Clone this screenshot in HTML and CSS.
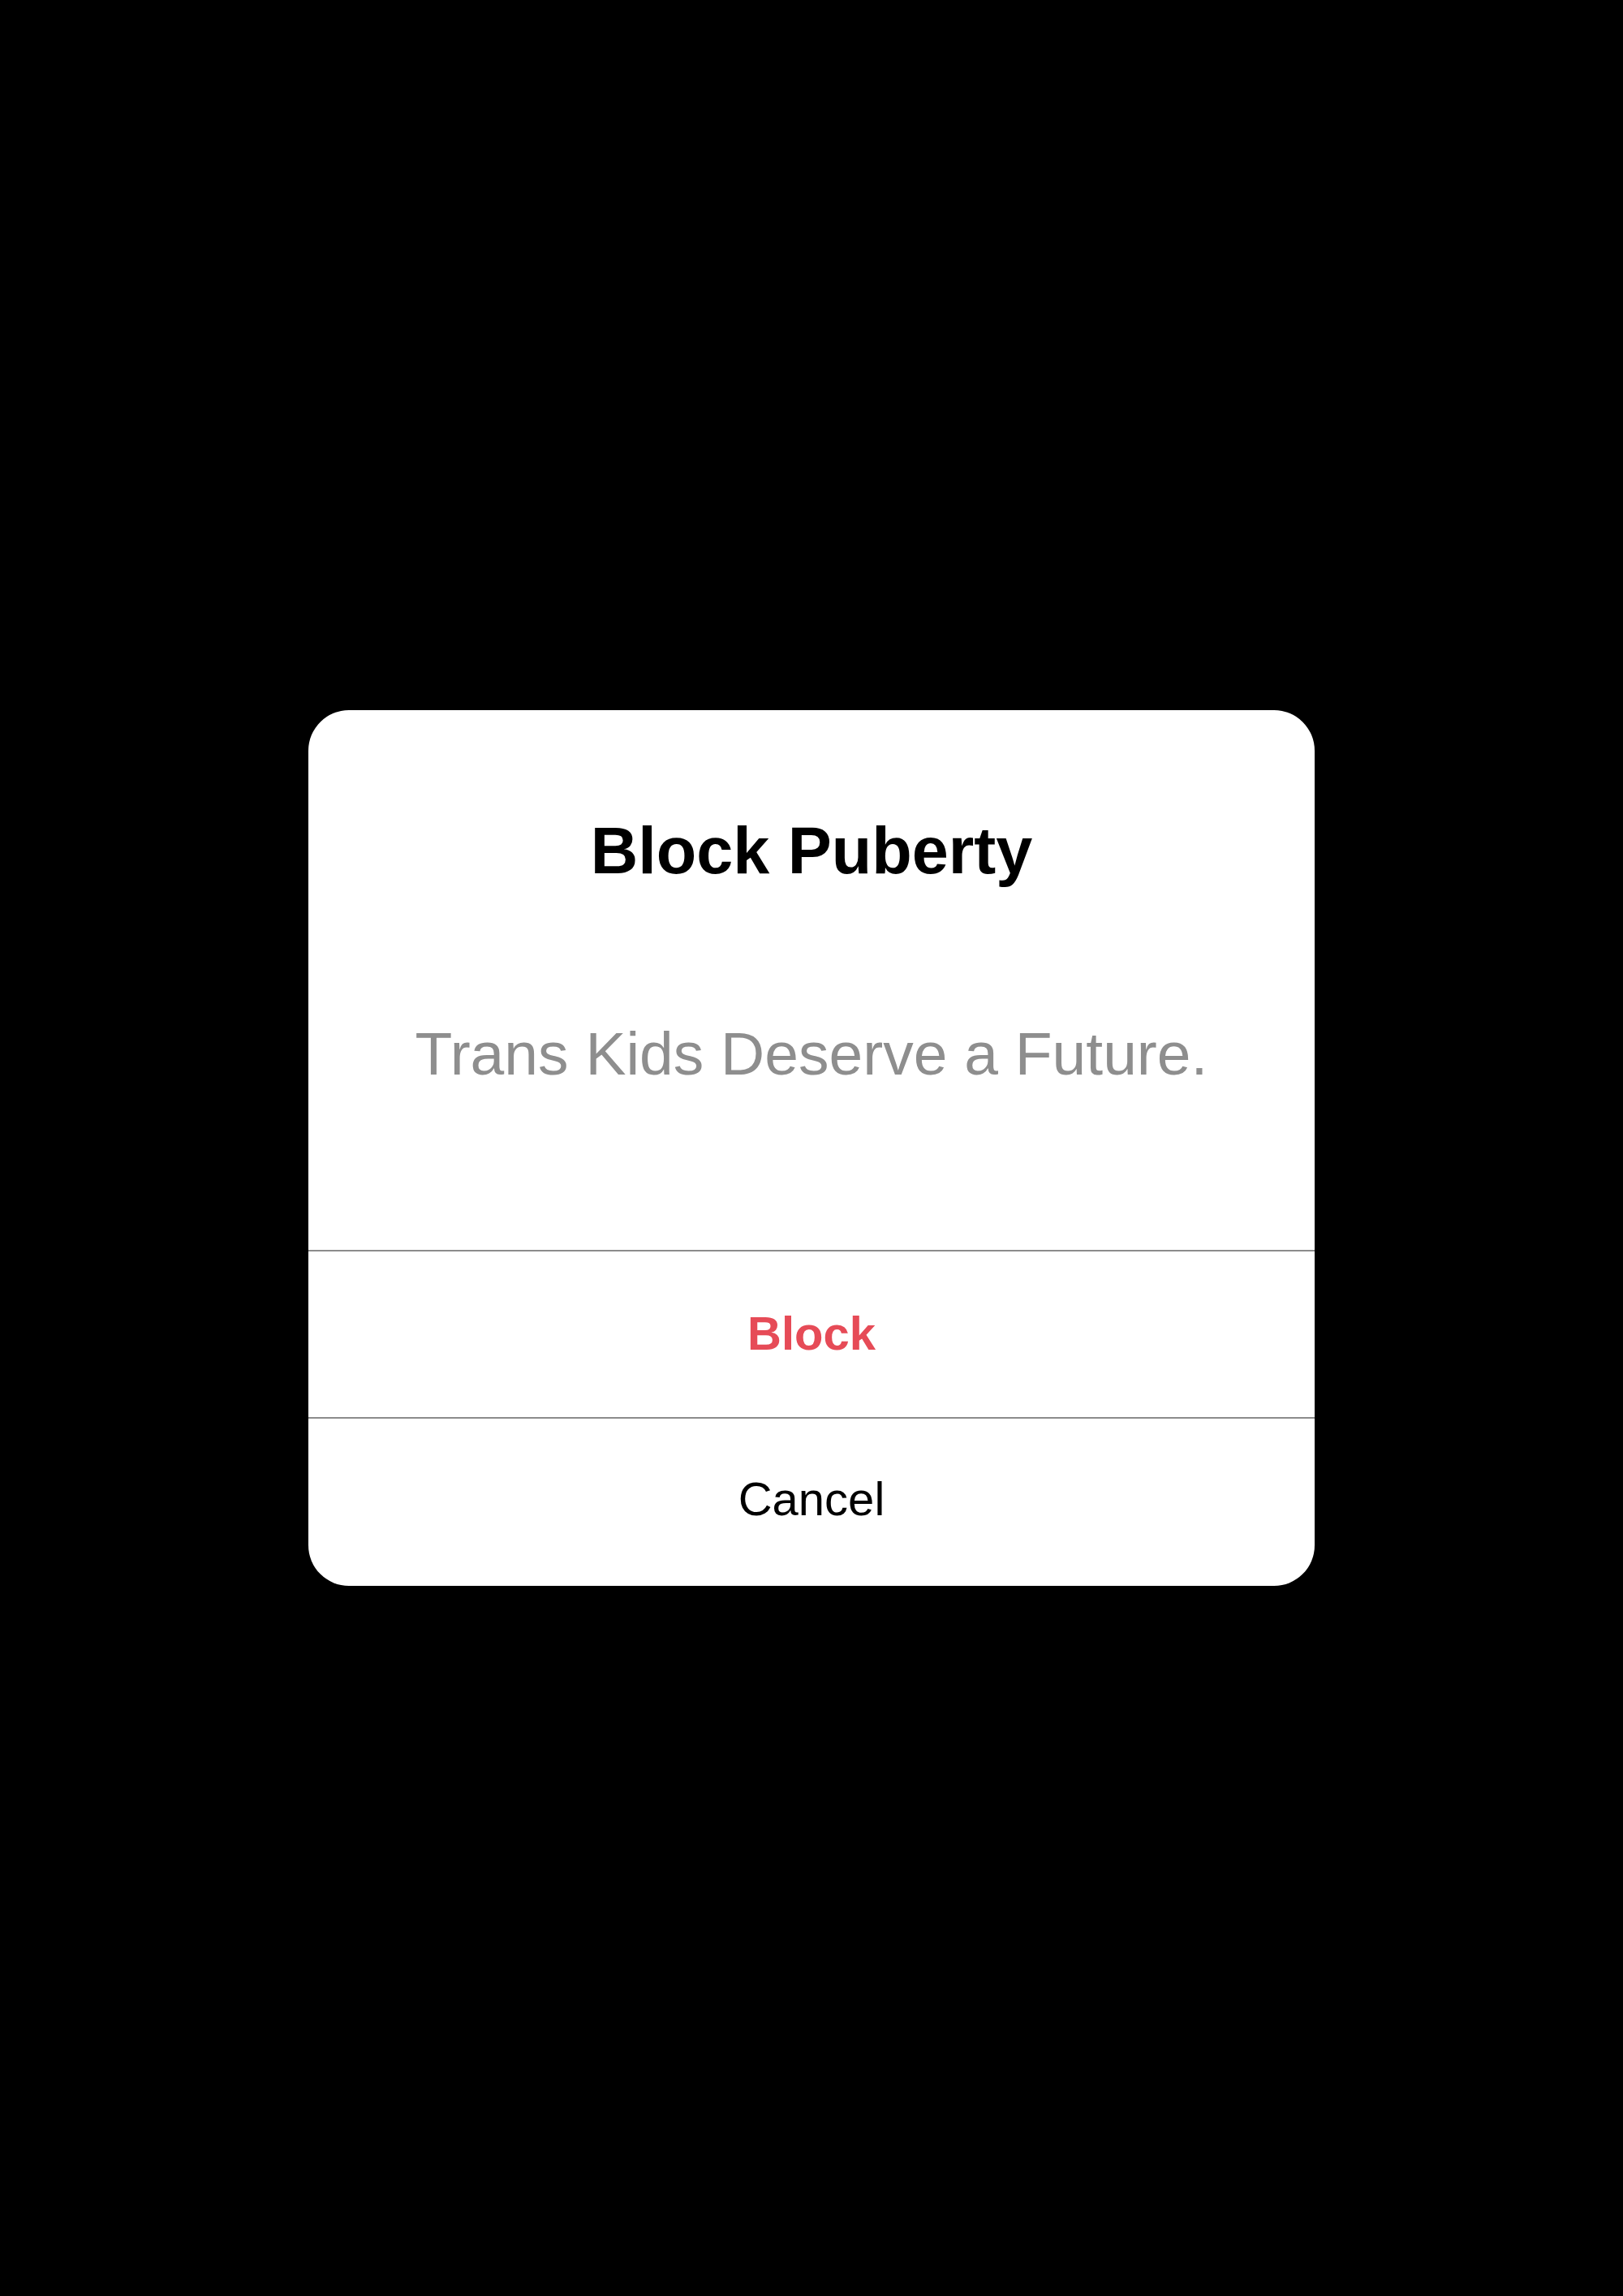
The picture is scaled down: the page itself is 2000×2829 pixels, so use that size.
FILE: index.html
```html
<!DOCTYPE html>
<html lang="en">
<head>
<meta charset="utf-8">
<title>Block Puberty</title>
<link rel="stylesheet" href="styles.css">
</head>
<body>
<div class="screen">
  <div class="alert" role="alertdialog">
    <div class="alert-body">
      <h1 class="alert-title">Block Puberty</h1>
      <p class="alert-message">Trans Kids Deserve a Future.</p>
    </div>
    <div class="alert-action alert-action-destructive">Block</div>
    <div class="alert-action alert-action-cancel">Cancel</div>
  </div>
</div>
</body>
</html>
```

FILE: styles.css
```css
html, body {
  margin: 0;
  padding: 0;
  background: #000;
}

.screen {
  min-height: 100vh;
  display: flex;
  align-items: center;
  justify-content: center;
  font-family: "Liberation Sans", Helvetica, Arial, sans-serif;
}

.alert {
  width: 1240px;
  background: #fff;
  border-radius: 50px;
  overflow: hidden;
  display: flex;
  flex-direction: column;
}

.alert-body {
  padding: 133px 40px 204px;
  display: flex;
  flex-direction: column;
  align-items: center;
  gap: 172px;
}

.alert-title {
  margin: 0;
  font-size: 81px;
  line-height: 81px;
  font-weight: 700;
  color: #000;
  text-align: center;
}

.alert-message {
  margin: 0;
  font-size: 75px;
  line-height: 75px;
  font-weight: 400;
  color: #8e8e8e;
  text-align: center;
}

.alert-action {
  border-top: 2px solid #8c8c8c;
  text-align: center;
  font-size: 58px;
  line-height: 58px;
}

.alert-action-destructive {
  padding: 72px 0 74px;
  font-weight: 700;
  color: #e64b57;
}

.alert-action-cancel {
  padding: 70px 0 78px;
  font-weight: 400;
  color: #000;
}
```
